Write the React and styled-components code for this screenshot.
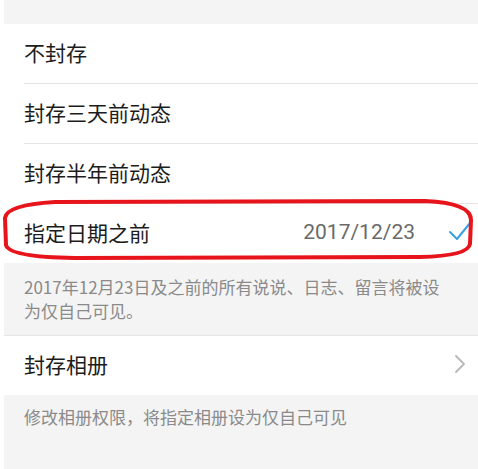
import styled, { createGlobalStyle } from "styled-components";

const Global = createGlobalStyle`
  html, body {
    margin: 0;
    padding: 0;
    background: #fff;
  }
  body {
    font-family: "Noto Sans CJK SC", "Noto Sans", sans-serif;
  }
`;

const Page = styled.div`
  position: relative;
  width: 478px;
  height: 469px;
  padding-left: 4px;
  box-sizing: border-box;
  overflow: hidden;
`;

const Screen = styled.div`
  background: #f4f4f5;
  height: 100%;
  padding-top: 24px;
  box-sizing: border-box;
`;

const Group = styled.div`
  background: #fff;
  border-top: ${(p) => (p.$topLine ? "1px solid #e6e6e6" : "none")};
`;

const Row = styled.div`
  position: relative;
  display: flex;
  align-items: center;
  height: 59px;
  padding-left: 20px;
  padding-bottom: 3px;
  box-sizing: border-box;
  & + & {
    border-top: 1px solid #e4e4e4;
    margin-left: 20px;
    padding-left: 0;
    height: 60px;
  }
`;

const Label = styled.span`
  flex: 1;
  font-size: 21px;
  color: #1c1c1c;
  line-height: 1;
`;

const Value = styled.span`
  font-family: Roboto, "Noto Sans CJK SC", sans-serif;
  font-size: 21px;
  color: #6a6a6a;
  margin-right: 33px;
`;

const IconSlot = styled.div`
  width: 24px;
  margin-right: 6px;
  display: flex;
  align-items: center;
  justify-content: center;
`;

const Note = styled.p`
  margin: 0;
  padding: ${(p) => p.$pad || "12px 28px 12px 20px"};
  font-size: 17px;
  line-height: 24px;
  color: #8a8a8a;
`;

const Mark = styled.svg`
  position: absolute;
  left: 0;
  top: 195px;
  pointer-events: none;
`;

function Check() {
  return (
    <svg width="24" height="22" viewBox="0 0 24 22">
      <polyline
        points="2,11 9,18 22,2"
        fill="none"
        stroke="#3aa0e2"
        strokeWidth="2"
        strokeLinecap="round"
        strokeLinejoin="round"
      />
    </svg>
  );
}

function Chevron() {
  return (
    <svg width="14" height="20" viewBox="0 0 14 20">
      <polyline
        points="3,2 11,10 3,18"
        fill="none"
        stroke="#b8b8b8"
        strokeWidth="1.8"
        strokeLinecap="round"
        strokeLinejoin="round"
      />
    </svg>
  );
}

const options = [
  { label: "不封存" },
  { label: "封存三天前动态" },
  { label: "封存半年前动态" },
  { label: "指定日期之前", value: "2017/12/23", checked: true },
];

export default function App() {
  return (
    <>
      <Global />
      <Page>
        <Screen>
          <Group>
            {options.map((o) => (
              <Row key={o.label}>
                <Label>{o.label}</Label>
                {o.value && <Value>{o.value}</Value>}
                <IconSlot>{o.checked && <Check />}</IconSlot>
              </Row>
            ))}
          </Group>
          <Note>2017年12月23日及之前的所有说说、日志、留言将被设为仅自己可见。</Note>
          <Group $topLine>
            <Row>
              <Label>封存相册</Label>
              <IconSlot>
                <Chevron />
              </IconSlot>
            </Row>
          </Group>
          <Note $pad="10px 20px">修改相册权限，将指定相册设为仅自己可见</Note>
        </Screen>
        <Mark width="478" height="70" viewBox="0 195 478 70">
          <path
            d="M 55 202 L 425 201 Q 471 203 471 220 L 470 244 Q 468 256 420 257 L 75 258 Q 9 257 6 245 L 5 218 Q 6 205 55 202 Z"
            fill="none"
            stroke="#e8141c"
            strokeWidth="4"
            strokeLinejoin="round"
          />
        </Mark>
      </Page>
    </>
  );
}
